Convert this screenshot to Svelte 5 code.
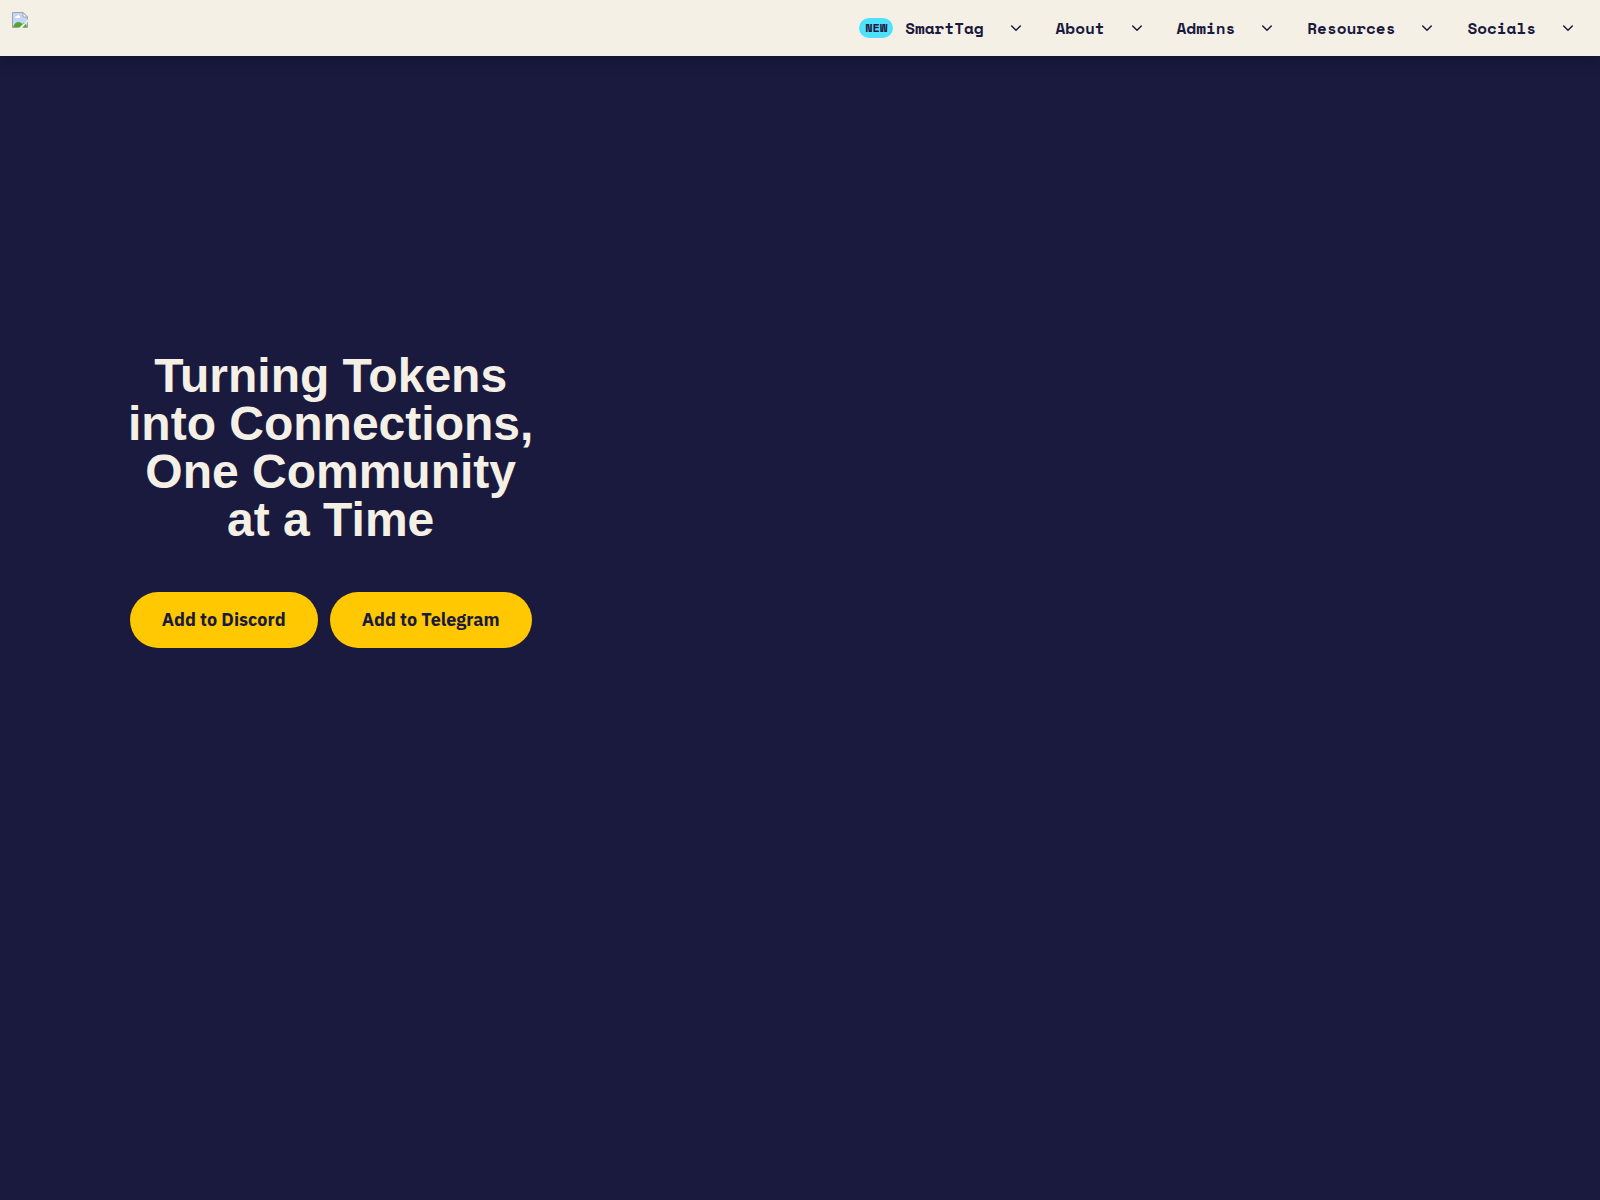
<script>
    const menus = [
        { title: 'SmartTag', href: '#smarttag', isNew: true },
        { title: 'About', href: '#about' },
        { title: 'Admins', href: '#admins' },
        { title: 'Resources', href: '#resources' },
        { title: 'Socials', href: '#socials' }
    ]
    let opened = $state('')

    function toggle(title) {
        opened = opened === title ? '' : title
    }
</script>

<header>
    <a class="logo" href="#home" aria-label="Home">
        <svg width="16" height="16" viewBox="0 0 16 16">
            <path d="M.5.5h10.500l4.500 4.500v10.500H.5z" fill="#c3d6f6" stroke="#a3a3a3" />
            <path d="M3 5.500c0-1 1-1.500 1.500-1 .5-2 3-1.500 3 0 1 0 1 1.500 0 1.500H3.500z" fill="#fff" />
            <path d="M1 15c1-3 3-5 5.500-5 2 0 3 1 4 2l1-1c2 0 3 2 3.500 4z" fill="#4fa833" />
            <path d="M11 .5v4.500h4.500z" fill="#fff" stroke="#a3a3a3" />
            <path d="M7 16l4-4 2-1 3-4v2.500l-6 6.500z" fill="#f5f0e6" />
        </svg>
    </a>
    <nav>
        {#each menus as menu}
            <div class="item">
                {#if menu.isNew}
                    <span class="badge">NEW</span>
                {/if}
                <a class="title" href={menu.href}>{menu.title}</a>
                <button
                    class="toggle"
                    aria-label={`${menu.title} menu`}
                    aria-expanded={opened === menu.title}
                    onclick={() => toggle(menu.title)}
                >
                    <svg width="12" height="8" viewBox="0 0 12 8">
                        <path d="M1.700 2L6 6.200l4.300-4.200" />
                    </svg>
                </button>
            </div>
        {/each}
    </nav>
</header>

<main>
    <section class="hero">
        <h1>Turning Tokens<br />into Connections,<br />One Community<br />at a Time</h1>
        <div class="actions">
            <button class="add">Add to Discord</button>
            <button class="add">Add to Telegram</button>
        </div>
    </section>
</main>

<style>
    :global(body) {
        margin: 0;
        background-color: #1a1a3f;
        color: #1a1a3f;
    }

    header {
        position: relative;
        display: flex;
        justify-content: space-between;
        align-items: flex-start;
        background-color: #f5f0e6;
        box-shadow: 0 4px 16px rgba(0, 0, 0, 0.3);
    }

    .logo {
        padding: 12px;
    }

    .logo svg {
        display: block;
    }

    nav {
        display: flex;
        gap: 20px;
        padding: 0 12px;
    }

    .item {
        display: flex;
        align-items: center;
        height: 56px;
    }

    .badge {
        margin-right: 12px;
        padding: 0 6px;
        border-radius: 10px;
        background-color: #4fe0fc;
        font: bold 12px/20px "Space Mono", "DejaVu Sans Mono", monospace;
    }

    .title {
        color: inherit;
        font: bold 16px/24px "Space Mono", "DejaVu Sans Mono", monospace;
        text-decoration: none;
    }

    .toggle {
        display: flex;
        justify-content: center;
        align-items: center;
        width: 40px;
        height: 40px;
        margin-left: 12px;
        padding: 0;
        border: none;
        background: none;
        cursor: pointer;
    }

    .toggle path {
        fill: none;
        stroke: #1a1a3f;
        stroke-width: 1.5;
        stroke-linecap: round;
        stroke-linejoin: round;
    }

    .hero {
        display: flex;
        flex-direction: column;
        align-items: center;
        gap: 48px;
        width: fit-content;
        padding: 296px 8%;
    }

    h1 {
        margin: 0;
        color: #f5f0e6;
        font: bold 48px/48px "Liberation Sans", Arial, sans-serif;
        text-align: center;
    }

    .actions {
        display: flex;
        gap: 12px;
    }

    .add {
        height: 56px;
        padding: 0 32px;
        border: none;
        border-radius: 28px;
        background-color: #ffc800;
        color: #1a1a3f;
        font: bold 18px/24px "IBM Plex Sans", Roboto, sans-serif;
        white-space: nowrap;
        cursor: pointer;
    }
</style>
